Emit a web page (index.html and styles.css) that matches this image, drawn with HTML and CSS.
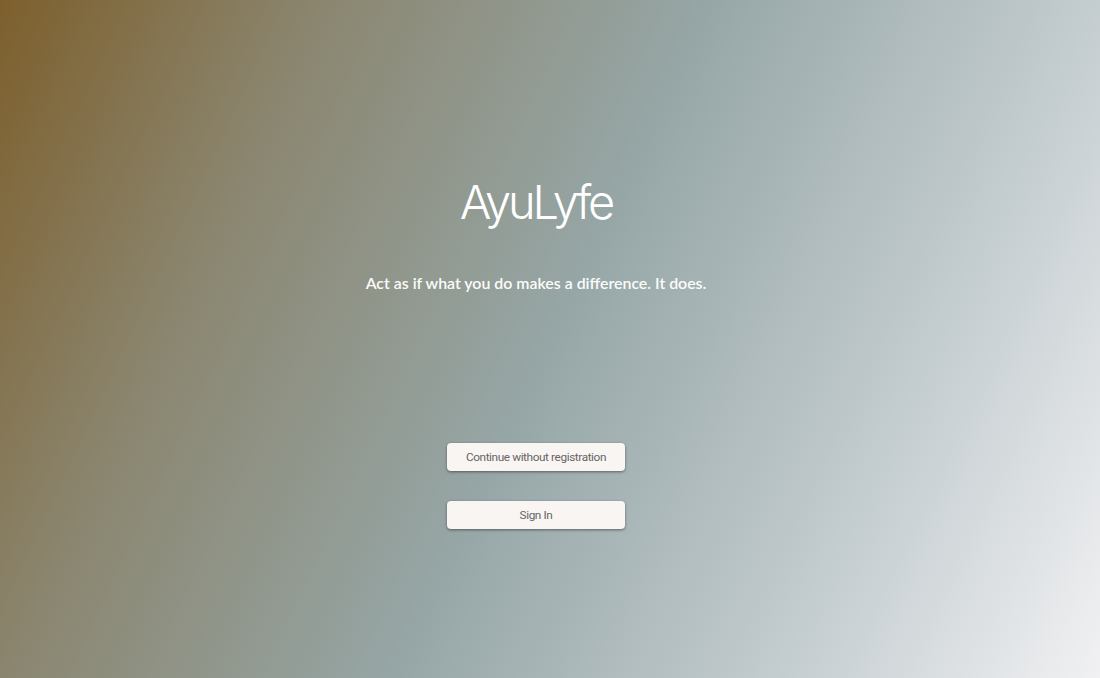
FILE: index.html
```html
<!DOCTYPE html>
<html lang="en">

<head>
    <meta charset="UTF-8">
    <meta name="viewport" content="width=device-width, initial-scale=1.0">
    <title>AyuLyfe</title>
    <link rel="stylesheet" href="styles.css">
</head>

<body>
    <main class="welcome">
        <h1 class="logo">AyuLyfe</h1>
        <p class="tagline">Act as if what you do makes a difference. It does.</p>
        <div class="actions">
            <button class="action_btn">Continue without registration</button>
            <button class="action_btn">Sign In</button>
        </div>
    </main>
</body>

</html>
```

FILE: styles.css
```css
html,
body {
    height: 100%;
}

body {
    margin: 0;
    overflow: hidden;
    background: linear-gradient(115deg, #7d5f2c 0%, #8b8670 23%, #96a6a6 50%, #c3cccf 77%, #f1f1f3 100%);
}

.welcome {
    height: 100%;
    box-sizing: border-box;
    padding: 170px 28px 0 0;
    display: flex;
    flex-direction: column;
    align-items: center;
}

.logo {
    margin: 0;
    font-family: "Inter", "Liberation Sans", sans-serif;
    font-size: 47px;
    line-height: 64px;
    font-weight: 300;
    letter-spacing: -3.2px;
    color: #fff;
}

.tagline {
    margin: 37px 0 0;
    font-family: "Lato", "Liberation Sans", sans-serif;
    font-size: 15.9px;
    line-height: 24px;
    font-weight: 600;
    color: #fbfbf9;
}

.actions {
    margin-top: 148px;
    display: flex;
    flex-direction: column;
    gap: 29.5px;
}

.action_btn {
    width: 178px;
    height: 28px;
    padding: 0;
    border: none;
    border-radius: 4px;
    background-color: #f9f5f3;
    box-shadow: 0 1px 3px rgba(0, 0, 0, 0.45);
    font-family: "Roboto", "Liberation Sans", sans-serif;
    font-size: 11.8px;
    letter-spacing: -0.4px;
    color: #666;
}
```
